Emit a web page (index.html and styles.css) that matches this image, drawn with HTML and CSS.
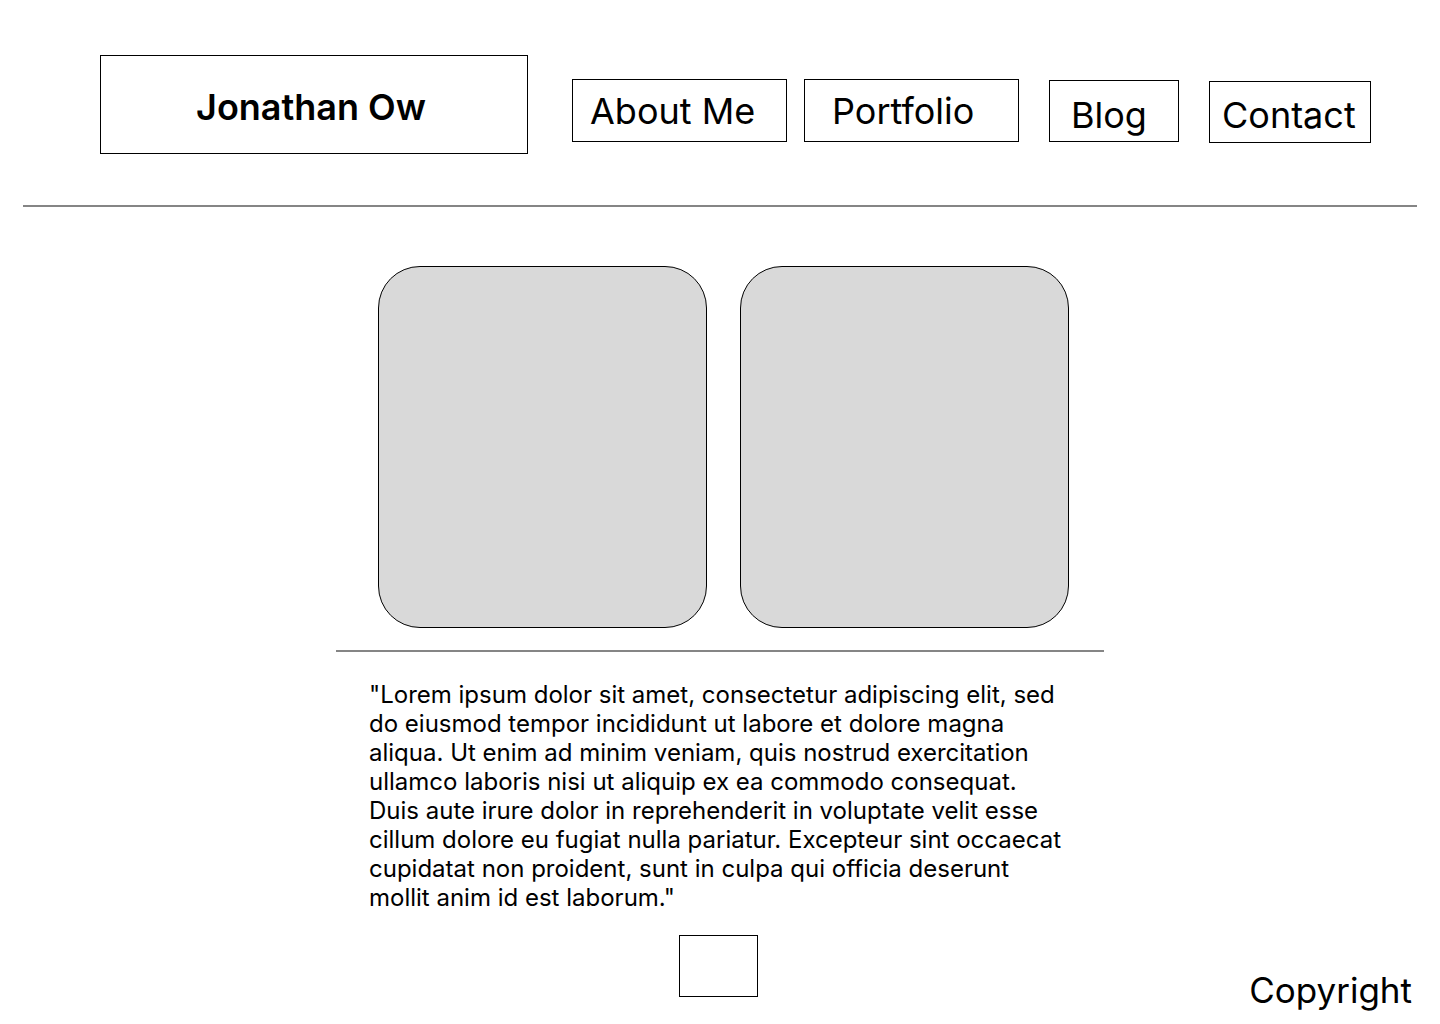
FILE: index.html
```html
<!DOCTYPE html>
<html lang="en">
<head>
    <meta charset="UTF-8">
    <title>Jonathan Ow</title>
    <link rel="stylesheet" href="styles.css">
</head>
<body>
<header class="top">
    <div class="logo">Jonathan Ow</div>
    <nav class="nav">
        <a class="nav-link about" href="#">About Me</a>
        <a class="nav-link portfolio" href="#">Portfolio</a>
        <a class="nav-link blog" href="#">Blog</a>
        <a class="nav-link contact" href="#">Contact</a>
    </nav>
</header>

<hr class="rule"/>

<main class="content">
    <div class="gallery">
        <div class="card"></div>
        <div class="card"></div>
    </div>
    <hr class="divider"/>
    <p class="quote">"Lorem ipsum dolor sit amet, consectetur adipiscing elit, sed do eiusmod tempor incididunt ut labore et dolore magna aliqua. Ut enim ad minim veniam, quis nostrud exercitation ullamco laboris nisi ut aliquip ex ea commodo consequat. Duis aute irure dolor in reprehenderit in voluptate velit esse cillum dolore eu fugiat nulla pariatur. Excepteur sint occaecat cupidatat non proident, sunt in culpa qui officia deserunt mollit anim id est laborum."</p>
</main>

<footer class="footer">
    <div></div>
    <div class="footer-box"></div>
    <div class="copyright">Copyright</div>
</footer>
</body>
</html>
```

FILE: styles.css
```css
* {
    box-sizing: border-box;
    margin: 0;
    padding: 0;
}

body {
    font-family: Inter, "Noto Sans", sans-serif;
    color: #000;
    background: #fff;
    width: 1440px;
    height: 1024px;
    overflow: hidden;
}

.top {
    display: flex;
    align-items: flex-start;
    height: 205px;
    padding: 55px 0 0 100px;
}

.logo {
    width: 428px;
    height: 99px;
    border: 1px solid #000;
    font-size: 36px;
    font-weight: 600;
    text-align: center;
    padding: 29px 6px 0 0;
}

.nav {
    display: flex;
    align-items: flex-start;
    margin-left: 44px;
}

.nav-link {
    display: block;
    height: 63px;
    border: 1px solid #000;
    color: #000;
    text-decoration: none;
    font-size: 36px;
    white-space: nowrap;
    padding-top: 9px;
}

.about {
    width: 215px;
    margin-top: 24px;
    padding-left: 17px;
}

.portfolio {
    width: 215px;
    margin-top: 24px;
    margin-left: 17px;
    padding-left: 27px;
}

.blog {
    width: 130px;
    height: 62px;
    margin-top: 25px;
    margin-left: 30px;
    padding-left: 21px;
    padding-top: 12px;
}

.contact {
    width: 162px;
    height: 62px;
    margin-top: 26px;
    margin-left: 30px;
    padding-left: 12px;
    padding-top: 11px;
}

.rule {
    border: none;
    border-top: 2px solid #858585;
    margin: 0 23px;
}

.content {
    width: 768px;
    margin: 0 auto;
    padding-top: 59px;
}

.gallery {
    display: flex;
    justify-content: center;
    gap: 33px;
    padding-left: 6px;
}

.card {
    width: 329px;
    height: 362px;
    background: #d9d9d9;
    border: 1px solid #000;
    border-radius: 42px;
}

.divider {
    border: none;
    border-top: 2px solid #858585;
    margin-top: 22px;
}

.quote {
    font-size: 24px;
    line-height: 29px;
    padding: 28px 35px 0 33px;
}

.footer {
    display: grid;
    grid-template-columns: 1fr auto 1fr;
    align-items: end;
    padding: 23px 28px 0 28px;
}

.footer-box {
    width: 79px;
    height: 62px;
    border: 1px solid #000;
    margin-right: 3px;
}

.copyright {
    justify-self: end;
    font-size: 35px;
    line-height: 44px;
    margin-bottom: -15px;
}
```
